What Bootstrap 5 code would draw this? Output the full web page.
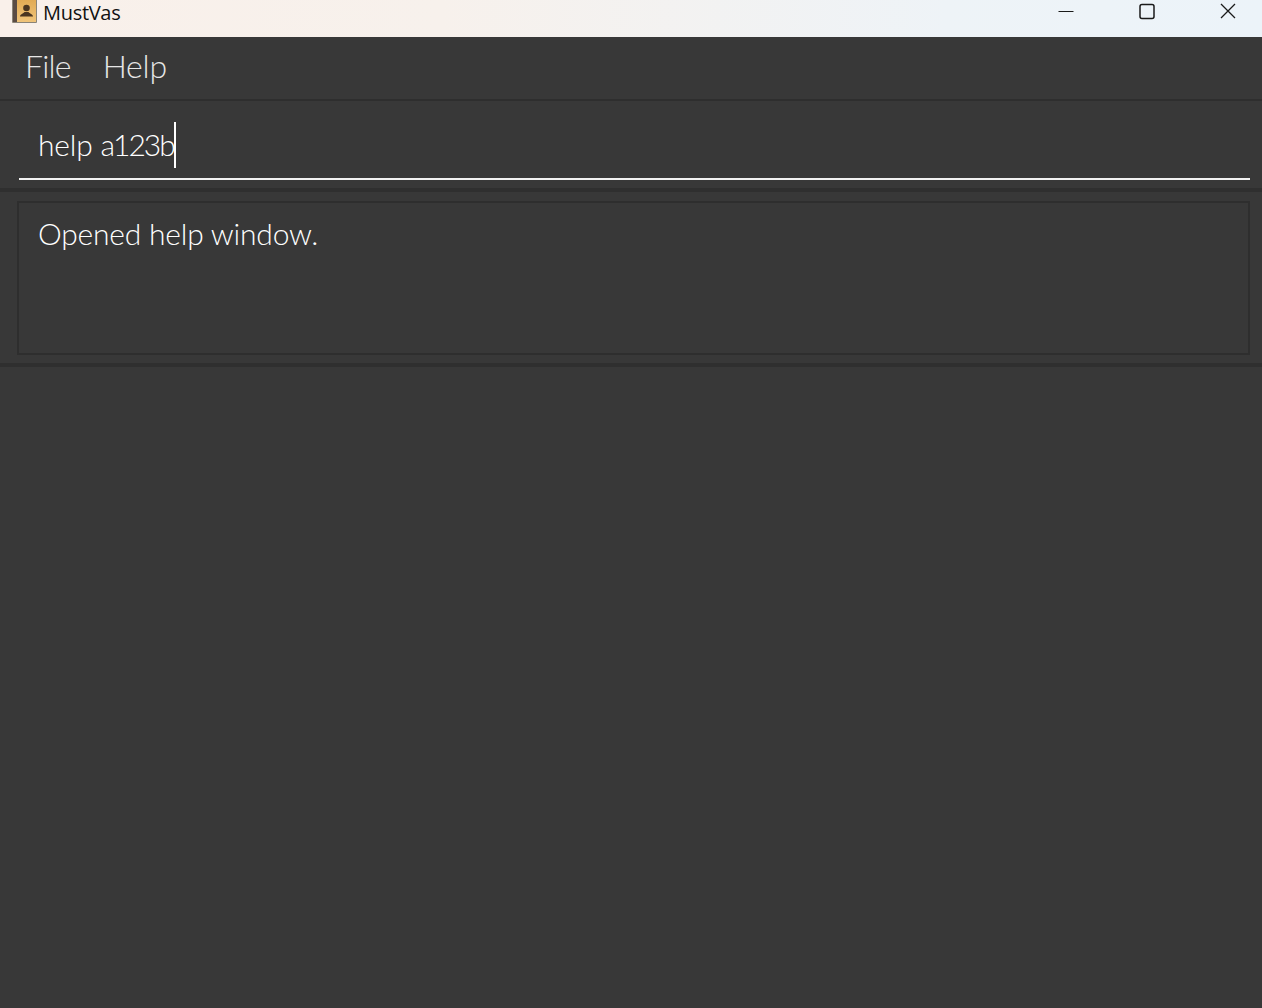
<!DOCTYPE html>
<html lang="en">
<head>
<meta charset="utf-8">
<title>MustVas</title>
<link href="https://cdn.jsdelivr.net/npm/bootstrap@5.3.0/dist/css/bootstrap.min.css" rel="stylesheet">
<style>
html,body{height:100%;}
body{background:#383838;font-family:"Lato","Open Sans",sans-serif;overflow:hidden;}
.app-window{height:1008px;}
.title-strip{height:37px;background:linear-gradient(90deg,#f9f0ea 0%,#f7f1ec 35%,#eef3f7 75%,#ecf3f9 100%);color:#111;}
.title-name{font-size:20px;line-height:26px;font-family:"Open Sans",sans-serif;margin-left:6px;letter-spacing:-.3px;}
.app-icon{width:26px;height:24px;margin-left:11px;display:block;}
.win-btns{margin-right:-6px;}
.win-btn{width:81px;display:flex;justify-content:center;}
.menu-strip{height:64px;border-bottom:2px solid #2e2e2e;padding-left:25px;padding-top:8px;gap:32px;}
.menu-entry{font-size:32px;font-weight:300;line-height:42px;color:#e6e6e6;letter-spacing:-.2px;}
.menu-snug{letter-spacing:-.8px;}
.cmd-zone{height:91px;border-bottom:4px solid #2f2f2f;padding:0 12px 0 19px;}
.cmd-field{height:79px;border-bottom:2px solid #f2f2f2;padding-left:19px;padding-top:21px;}
.cmd-text{font-size:30px;font-weight:300;line-height:46px;color:#fff;letter-spacing:-.2px;border-right:2px solid #fff;}
.cmd-line{display:block;margin-top:-1px;margin-bottom:1px;}
.cmd-tight{letter-spacing:-2px;}
.out-zone{height:175px;border-bottom:4px solid #2f2f2f;padding:9px 12px 0 17px;}
.out-box{height:154px;border:2px solid #2e2e2e;padding:8px 19px;}
.out-text{font-size:30px;font-weight:300;line-height:44px;color:#fff;letter-spacing:-.2px;}
</style>
</head>
<body>
<div class="app-window d-flex flex-column">
  <div class="title-strip d-flex align-items-start">
    <svg class="app-icon" viewBox="0 0 26 24" aria-hidden="true">
      <defs><linearGradient id="cover" x1="0" y1="0" x2="0" y2="1"><stop offset="0" stop-color="#e0a850"/><stop offset="1" stop-color="#f0c47a"/></linearGradient></defs>
      <rect x="1" y="-2" width="25" height="25" rx="1" fill="#8a8478"/>
      <rect x="2" y="-2" width="23" height="24" fill="url(#cover)"/>
      <rect x="2" y="-2" width="4" height="24" fill="#5a4c44"/>
      <circle cx="15.500" cy="8" r="3.300" fill="#4a3520"/>
      <path d="M9 16.500c0-2.500 3.500-2.700 4.500-4.500h4c1 1.800 4.500 2 4.500 4.500z" fill="#4a3520"/>
    </svg>
    <span class="title-name">MustVas</span>
    <div class="win-btns d-flex ms-auto">
      <div class="win-btn"><svg width="16" height="24" viewBox="0 0 16 24"><path d="M0.500 11.500h15" stroke="#1a1a1a" stroke-width="1"/></svg></div>
      <div class="win-btn"><svg width="16" height="24" viewBox="0 0 16 24"><rect x="1" y="4.500" width="14" height="14" rx="2" fill="none" stroke="#1a1a1a" stroke-width="1.500"/></svg></div>
      <div class="win-btn"><svg width="16" height="24" viewBox="0 0 16 24"><path d="M1 4l14 14M15 4L1 18" stroke="#1a1a1a" stroke-width="1.300"/></svg></div>
    </div>
  </div>
  <div class="menu-strip d-flex">
    <span class="menu-entry menu-snug">File</span>
    <span class="menu-entry">Help</span>
  </div>
  <div class="cmd-zone">
    <div class="cmd-field"><span class="cmd-text d-inline-block"><span class="cmd-line">help <span class="cmd-tight">a123b</span></span></span></div>
  </div>
  <div class="out-zone">
    <div class="out-box"><div class="out-text">Opened help window.</div></div>
  </div>
</div>
<script src="https://cdn.jsdelivr.net/npm/bootstrap@5.3.0/dist/js/bootstrap.bundle.min.js"></script>
</body>
</html>
